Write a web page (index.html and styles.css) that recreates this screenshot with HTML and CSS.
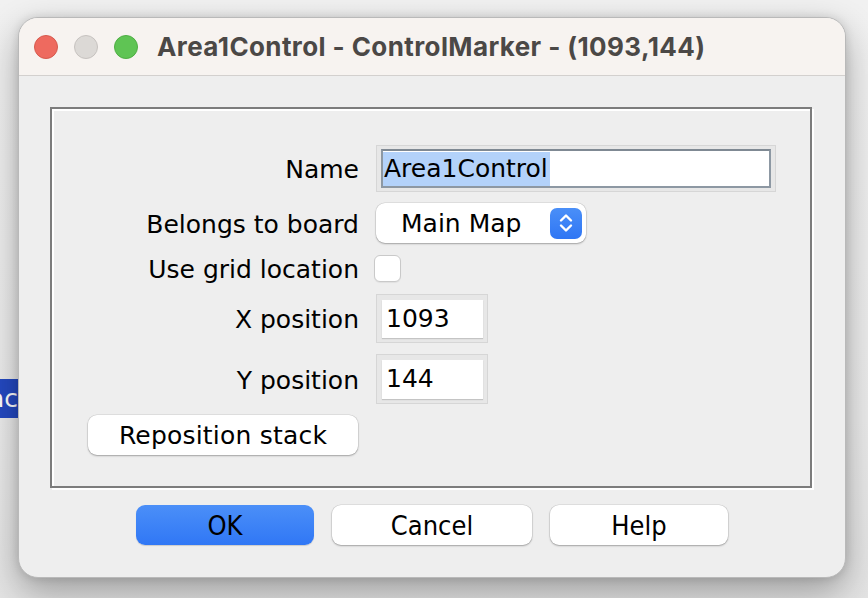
FILE: index.html
```html
<!DOCTYPE html>
<html lang="en">
<head>
    <meta charset="UTF-8">
    <title>Area1Control - ControlMarker - (1093,144)</title>
    <link rel="stylesheet" href="styles.css">
</head>
<body>

<div class="behind">ac</div>

<div class="window">
    <div class="titlebar">
        <span class="light red"></span>
        <span class="light gray"></span>
        <span class="light green"></span>
        <div class="title">Area1Control - ControlMarker - (1093,144)</div>
    </div>

    <div class="content">
        <div class="panel">
            <div class="form">
                <div class="label">Name</div>
                <div class="field-box wide">
                    <div class="field focused"><span class="selected">Area1Control</span></div>
                </div>

                <div class="label">Belongs to board</div>
                <div class="combo">
                    <span class="combo-text">Main Map</span>
                    <span class="stepper">
                        <svg width="16" height="22" viewBox="0 0 16 22">
                            <path d="M3 8.5 L8 3.5 L13 8.5" fill="none" stroke="#fff" stroke-width="2.4" stroke-linecap="round" stroke-linejoin="round"/>
                            <path d="M3 13.5 L8 18.5 L13 13.5" fill="none" stroke="#fff" stroke-width="2.4" stroke-linecap="round" stroke-linejoin="round"/>
                        </svg>
                    </span>
                </div>

                <div class="label">Use grid location</div>
                <div class="checkbox"></div>

                <div class="label">X position</div>
                <div class="field-box small">
                    <div class="field">1093</div>
                </div>

                <div class="label">Y position</div>
                <div class="field-box small">
                    <div class="field">144</div>
                </div>

                <button class="btn reposition">Reposition stack</button>
            </div>
        </div>

        <div class="buttons">
            <button class="btn dlg primary">OK</button>
            <button class="btn dlg cancel">Cancel</button>
            <button class="btn dlg">Help</button>
        </div>
    </div>
</div>

</body>
</html>
```

FILE: styles.css
```css
body {
    margin: 0;
    width: 868px;
    height: 598px;
    overflow: hidden;
    position: relative;
    background: linear-gradient(180deg, #f1f1f1 0%, #ececec 70%, #e4e4e4 100%);
    font-family: "DejaVu Sans", sans-serif;
    color: #000;
    padding: 17px 0 0 18px;
    box-sizing: border-box;
}

/* the window lying behind the dialog */
.behind {
    position: absolute;
    left: -16px;
    top: 379px;
    width: 34px;
    height: 39px;
    background: #2449c2;
    color: #fff;
    font-size: 25px;
    line-height: 39px;
    text-align: right;
    overflow: hidden;
}

/* Dialog window */
.window {
    position: relative;
    width: 828px;
    height: 561px;
    box-sizing: border-box;
    background: #eeeeee;
    border: 1px solid #b9b9b9;
    border-radius: 20px;
    overflow: hidden;
    box-shadow: 0 14px 36px rgba(0, 0, 0, 0.32), 0 0 10px rgba(0, 0, 0, 0.12);
}

.titlebar {
    height: 57px;
    background: #f7f3f0;
    border-bottom: 1px solid #d3d0ce;
    display: flex;
    align-items: center;
    padding-left: 15px;
}

.light {
    width: 24px;
    height: 24px;
    border-radius: 50%;
    box-sizing: border-box;
    margin-right: 16px;
}

.light.red {
    background: #ee6a5f;
    border: 1px solid #d65a4e;
}

.light.gray {
    background: #dcd9d6;
    border: 1px solid #c6c2bf;
}

.light.green {
    background: #5fc454;
    border: 1px solid #4fae44;
    margin-right: 19px;
}

.title {
    font-family: Inter, "Open Sans", sans-serif;
    font-weight: 700;
    font-size: 26px;
    color: #4b4846;
    letter-spacing: 0.4px;
}

.content {
    padding: 31px 31px 0 31px;
}

/* etched border panel */
.panel {
    height: 381px;
    width: 762px;
    box-sizing: border-box;
    border: 2px solid #7c7c7c;
    box-shadow: inset 2px 2px 0 #fff, 2px 2px 0 #fff;
    padding-top: 36px;
}

.form {
    display: grid;
    grid-template-columns: 307px 1fr;
    grid-template-rows: 47px 40px 29px 49px 50px 40px;
    column-gap: 17px;
    row-gap: 11px;
}

.label {
    font-size: 25px;
    text-align: right;
    align-self: center;
    padding-top: 2px;
}

.field-box {
    box-sizing: border-box;
    background: #e7e7e7;
    border: 1px solid #d6d6d6;
}

.field-box.wide {
    width: 400px;
    padding: 3px 4px;
}

.field-box.small {
    width: 112px;
    padding: 5px 4px 4px 5px;
}

.field {
    height: 100%;
    box-sizing: border-box;
    background: #fff;
    font-size: 25px;
    line-height: 38px;
    padding-left: 4px;
    box-shadow: 0 1px 1px #c4c4c4;
}

.field.focused {
    border: 2px solid #8d98a3;
    border-top-color: #7f8993;
    padding-left: 0;
    line-height: 35px;
    box-shadow: none;
}

.selected {
    background: #b3d2fa;
    display: inline-block;
    line-height: 34px;
    padding: 0 2px 0 1px;
}

.combo {
    width: 210px;
    box-sizing: border-box;
    background: #fff;
    border-radius: 9px;
    box-shadow: 0 1px 2px rgba(0, 0, 0, 0.28), 0 0 0 0.5px rgba(0, 0, 0, 0.12);
    display: flex;
    align-items: center;
    justify-content: space-between;
    padding: 0 4px 0 25px;
}

.combo-text {
    font-size: 25px;
}

.stepper {
    width: 32px;
    height: 31px;
    border-radius: 7px;
    background: linear-gradient(180deg, #4a8ff8, #2f76f4);
    display: flex;
    align-items: center;
    justify-content: center;
}

.checkbox {
    width: 27px;
    height: 27px;
    margin-left: -2px;
    align-self: center;
    box-sizing: border-box;
    background: #fff;
    border: 1px solid #c9c9c9;
    border-radius: 6px;
    box-shadow: 0 1px 1px rgba(0, 0, 0, 0.06);
}

.btn {
    font-family: "DejaVu Sans", sans-serif;
    font-size: 25px;
    color: #000;
    background: #fff;
    border: none;
    border-radius: 9px;
    box-shadow: 0 1px 2px rgba(0, 0, 0, 0.28), 0 0 0 0.5px rgba(0, 0, 0, 0.12);
    padding: 0;
    cursor: pointer;
}

.reposition {
    grid-column: 1 / span 2;
    justify-self: start;
    margin-left: 36px;
    width: 270px;
    height: 40px;
    letter-spacing: 0.2px;
}

.buttons {
    display: flex;
    justify-content: center;
    gap: 18px;
    margin-top: 17px;
}

.dlg {
    font-family: "DejaVu Sans Condensed", "DejaVu Sans", sans-serif;
    font-stretch: condensed;
    font-size: 27px;
    width: 178px;
    height: 40px;
}

.dlg.cancel {
    width: 200px;
}

.dlg.primary {
    background: linear-gradient(180deg, #4b8ff8, #3077f5);
    box-shadow: 0 1px 1px rgba(0, 0, 0, 0.15);
}
```
